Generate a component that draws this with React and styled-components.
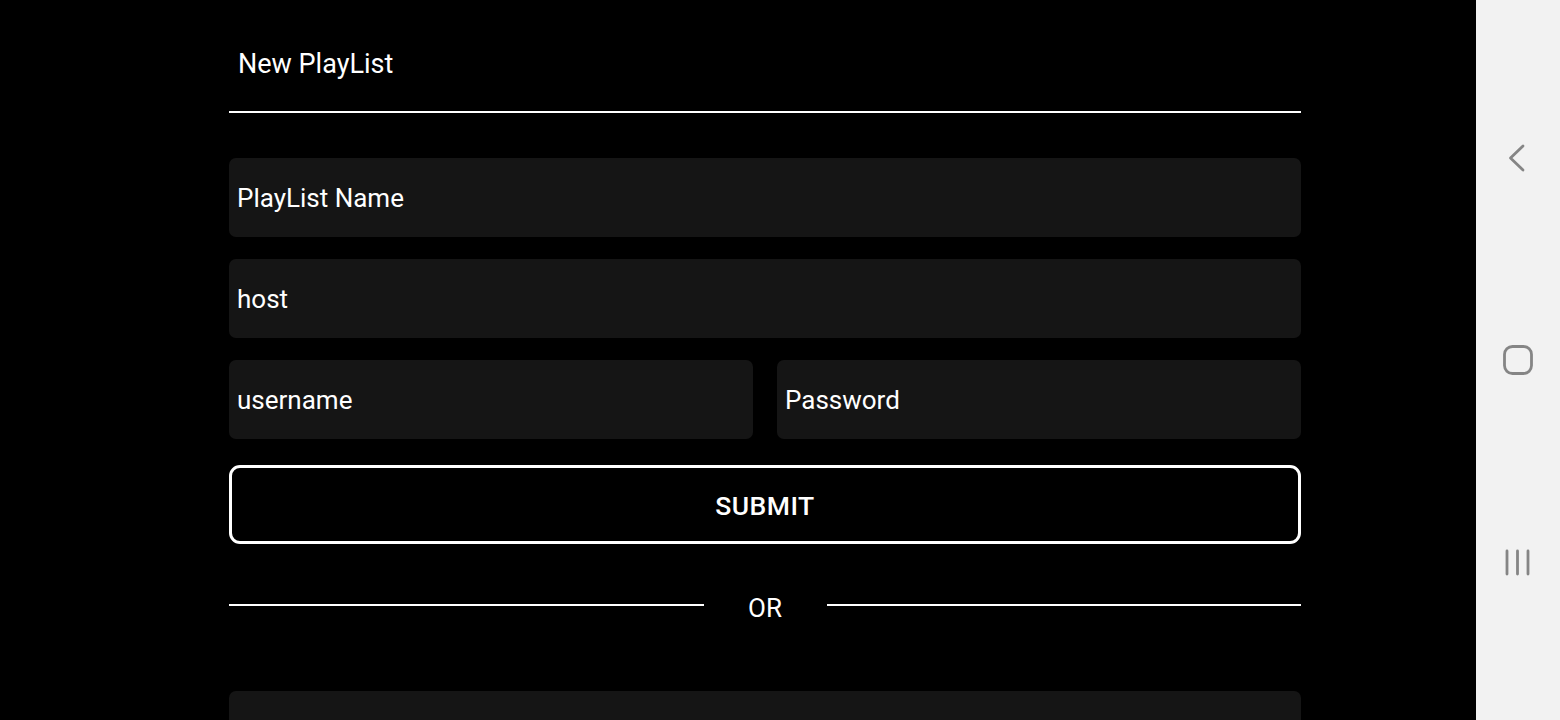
import React from "react";
import styled, { createGlobalStyle } from "styled-components";

const Global = createGlobalStyle`
  html, body {
    margin: 0;
    padding: 0;
    background: #000;
    font-family: Roboto, "Noto Sans", sans-serif;
    overflow: hidden;
  }
`;

// Styles
const Screen = styled.div`
  display: flex;
  width: 1560px;
  height: 720px;
  overflow: hidden;
`;

const Main = styled.div`
  flex: 1;
  background: #000;
  padding-left: 229px;
`;

const Form = styled.div`
  display: flex;
  flex-direction: column;
  width: 1072px;
`;

const Header = styled.div`
  height: 67px;
  padding: 44px 9px 0px 9px;
  border-bottom: 2px solid #fff;
  color: #fff;
  font-size: 27px;
  line-height: 40px;
`;

const Field = styled.div`
  display: flex;
  align-items: center;
  flex: ${(p) => (p.$grow ? "1 1 0" : "none")};
  height: 79px;
  padding: 0px 8px;
  box-sizing: border-box;
  background: #151515;
  border-radius: 7px;
  color: #fff;
  font-size: 26px;
  margin-top: ${(p) => p.$top || 0}px;
`;

const Row = styled.div`
  display: flex;
  flex: none;
  gap: 24px;
  margin-top: ${(p) => p.$top || 0}px;
`;

const Submit = styled.button`
  flex: none;
  height: 79px;
  margin-top: 26px;
  padding-top: 2px;
  background: #000;
  border: 3px solid #fff;
  border-radius: 11px;
  color: #fff;
  font-family: Roboto, sans-serif;
  font-size: 26.5px;
  font-weight: 500;
  letter-spacing: 0.5px;
`;

const Divider = styled.div`
  display: flex;
  flex: none;
  align-items: center;
  height: 40px;
  margin-top: 42px;
  color: #fff;
  font-size: 26px;

  hr {
    flex: 1;
    margin: 0px;
    border: none;
    border-top: 2px solid #fff;
    position: relative;
    top: -1px;
  }

  span {
    width: 123px;
    padding-top: 3px;
    text-align: center;
  }
`;

const NavBar = styled.div`
  width: 84px;
  background: #f2f2f2;
  display: flex;
  flex-direction: column;
  align-items: center;
  padding-top: 142px;
  gap: 170px;
`;

const NavIcon = styled.svg`
  width: 32px;
  height: 32px;
  fill: none;
  stroke: #858585;
  stroke-width: 2.8;
  stroke-linecap: round;
  stroke-linejoin: round;
`;

function App() {
  return (
    <>
      <Global />
      <Screen>
        <Main>
          <Form>
            <Header>New PlayList</Header>
            <Field $top={45}>PlayList Name</Field>
            <Field $top={22}>host</Field>
            <Row $top={22}>
              <Field $grow>username</Field>
              <Field $grow>Password</Field>
            </Row>
            <Submit>SUBMIT</Submit>
            <Divider>
              <hr />
              <span>OR</span>
              <hr />
            </Divider>
            <Field $top={65} />
          </Form>
        </Main>
        <NavBar>
          <NavIcon viewBox="0 0 32 32">
            <path d="M21 4 L8.5 16 L21 28" />
          </NavIcon>
          <NavIcon viewBox="0 0 32 32">
            <rect x="2.5" y="2.5" width="27" height="27" rx="8" />
          </NavIcon>
          <NavIcon viewBox="0 0 32 32">
            <path d="M5 5 V28 M15.5 5 V28 M26 5 V28" />
          </NavIcon>
        </NavBar>
      </Screen>
    </>
  );
}

export default App;
